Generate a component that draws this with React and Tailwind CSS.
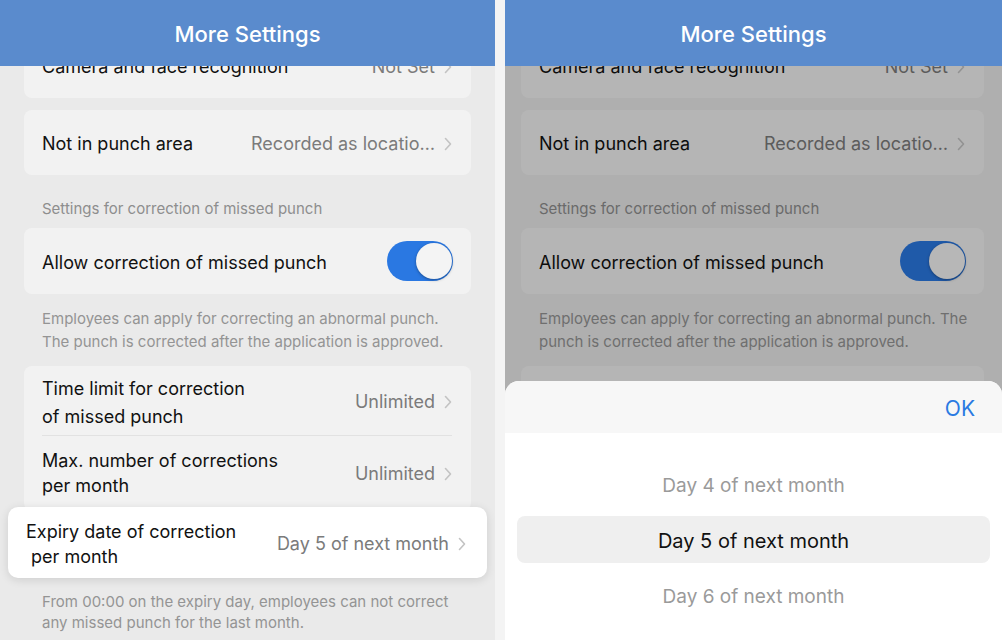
import React from "react";

function Chevron({ className = "" }) {
  return (
    <svg width="8" height="14" viewBox="0 0 8 14" fill="none" className={className}>
      <path d="M1.5 1.5l5 5.5-5 5.5" stroke="#c3c3c3" strokeWidth="1.6" strokeLinecap="round" strokeLinejoin="round" />
    </svg>
  );
}

function Toggle() {
  return (
    <div className="w-[66px] h-[40px] rounded-full bg-[#2a78e2] flex items-center justify-end pr-[1px]">
      <div className="w-[36px] h-[36px] rounded-full bg-[#f4f4f4] shadow-[0_1px_3px_rgba(0,0,0,0.35)]" />
    </div>
  );
}

function Value({ children }) {
  return (
    <div className="flex items-center gap-[9px] shrink-0 pt-[2px]">
      <span className="text-[18px] text-[#7b7b7b]">{children}</span>
      <Chevron />
    </div>
  );
}

function Header() {
  return (
    <div className="relative z-20 h-[66px] bg-[#5a8bcd] flex items-center justify-center pt-[2px]">
      <span className="text-white text-[22px] font-medium">More Settings</span>
    </div>
  );
}

function Content({ px, description, short = false }) {
  return (
    <div className={`-mt-[33px] flex flex-col ${px}`}>
      <div className="h-[65px] rounded-[8px] bg-[#f2f2f2] pl-[18px] pr-[19px] flex items-center justify-between">
        <span className="text-[18px] text-[#111] pt-[2px]">Camera and face recognition</span>
        <Value>Not Set</Value>
      </div>

      <div className="mt-[12px] h-[65px] rounded-[8px] bg-[#f2f2f2] pl-[18px] pr-[19px] flex items-center justify-between">
        <span className="text-[18px] text-[#111] pt-[2px]">Not in punch area</span>
        <Value>Recorded as locatio…</Value>
      </div>

      <div className="pt-[24px] pb-[9px] pl-[18px] text-[15px] leading-[20px] text-[#8e8e8e]">
        Settings for correction of missed punch
      </div>

      <div className="h-[66px] rounded-[8px] bg-[#f2f2f2] pl-[18px] pr-[18px] flex items-center justify-between">
        <span className="text-[18px] text-[#111] pt-[2px]">Allow correction of missed punch</span>
        <Toggle />
      </div>

      <div className="pt-[13px] pb-[13px] pl-[18px] text-[15px] leading-[23px] text-[#949494]">
        {description}
      </div>

      <div className="rounded-[8px] bg-[#f2f2f2] pl-[18px] pr-[19px]">
        <div className="h-[70px] flex items-center justify-between border-b border-[#e2e2e2]">
          <span className="text-[18px] leading-[28px] text-[#111] pt-[4px]">
            Time limit for correction
            <br />
            of missed punch
          </span>
          {!short && <Value>Unlimited</Value>}
        </div>
        {!short && (
          <div className="h-[75px] pt-[12px] flex items-start justify-between">
            <span className="text-[18px] leading-[25px] text-[#111]">
              Max. number of corrections
              <br />
              per month
            </span>
            <div className="pt-[10px]">
              <Value>Unlimited</Value>
            </div>
          </div>
        )}
      </div>

      {!short && (
        <>
          <div className="relative z-10 -mt-[4px] -mx-[16px] h-[71px] rounded-[10px] bg-white shadow-[0_2px_10px_rgba(0,0,0,0.12)] pl-[18px] pr-[21px] flex items-center justify-between">
            <span className="text-[18px] leading-[25px] text-[#111] pt-[2px]">
              Expiry date of correction
              <br />
              &nbsp;per month
            </span>
            <Value>Day 5 of next month</Value>
          </div>

          <div className="pt-[13px] pl-[18px] text-[15px] leading-[21px] text-[#949494]">
            From 00:00 on the expiry day, employees can not correct
            <br />
            any missed punch for the last month.
          </div>
        </>
      )}
    </div>
  );
}

function Picker() {
  return (
    <div className="absolute z-30 left-0 right-0 bottom-0 h-[259px] rounded-t-[14px] overflow-hidden bg-white">
      <div className="h-[52px] bg-[#f7f7f7] flex items-center justify-end pr-[27px] pt-[3px]">
        <span className="text-[21px] text-[#2a7ae2]">OK</span>
      </div>
      <div className="pt-[28px] flex flex-col gap-[8px]">
        <div className="h-[47px] flex items-center justify-center pt-[4px]">
          <span className="text-[19px] text-[#9a9a9a]">Day 4 of next month</span>
        </div>
        <div className="mx-[12px] h-[47px] rounded-[8px] bg-[#efefef] flex items-center justify-center pt-[2px]">
          <span className="text-[20px] text-[#111]">Day 5 of next month</span>
        </div>
        <div className="h-[47px] flex items-center justify-center pt-[5px]">
          <span className="text-[19px] text-[#9a9a9a]">Day 6 of next month</span>
        </div>
      </div>
    </div>
  );
}

export default function App() {
  return (
    <div className="w-[1002px] h-[640px] flex bg-[#f4f4f4] font-['Inter',sans-serif] overflow-hidden">
      {/* Left screen */}
      <div className="relative w-[495px] h-[640px] overflow-hidden bg-[#eaeaea]">
        <Header />
        <Content
          px="pl-[24px] pr-[24px]"
          description={
            <>
              Employees can apply for correcting an abnormal punch.
              <br />
              The punch is corrected after the application is approved.
            </>
          }
        />
      </div>

      <div className="w-[10px] shrink-0" />

      {/* Right screen with picker */}
      <div className="relative w-[497px] h-[640px] overflow-hidden bg-[#eaeaea]">
        <Header />
        <Content
          short
          px="pl-[16px] pr-[18px]"
          description={
            <>
              Employees can apply for correcting an abnormal punch. The
              <br />
              punch is corrected after the application is approved.
            </>
          }
        />
        <div className="absolute inset-0 z-10 bg-black/25" />
        <Picker />
      </div>
    </div>
  );
}
